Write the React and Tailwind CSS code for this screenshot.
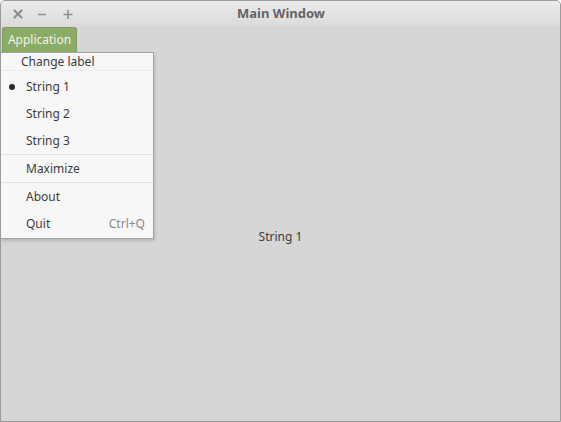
import React from 'react';

const font = { fontFamily: '"Noto Sans", "DejaVu Sans", sans-serif' };

const MenuItem = ({ label, checked, shortcut }) => (
  <div className="relative flex h-[27px] items-center pl-[25px] pr-[8px]">
    {checked && (
      <span className="absolute left-[8px] top-[11px] h-[6px] w-[6px] rounded-full bg-[#2b2b2b]"></span>
    )}
    <span className="flex-1 text-[#3c3c3c]">{label}</span>
    {shortcut && <span className="text-[#8a8a8a]">{shortcut}</span>}
  </div>
);

const Separator = () => <div className="h-px bg-[#e2e2e2]"></div>;

export default function App() {
  return (
    <div
      className="flex h-[422px] w-[561px] flex-col overflow-hidden rounded-t-[5px] border border-[#9b9b9b] bg-[#d6d6d6] text-[12px]"
      style={font}
    >
      {/* Title bar */}
      <div className="relative flex h-[26px] shrink-0 items-center bg-gradient-to-b from-[#ececec] to-[#dadada]">
        <div className="flex items-center gap-[12px] pl-[11px] text-[#8e8e8e]">
          <svg width="12" height="12" viewBox="0 0 12 12">
            <path d="M2.5 2.5 L9.5 9.5 M9.5 2.5 L2.5 9.5" stroke="#8e8e8e" strokeWidth="2.2" strokeLinecap="round" />
          </svg>
          <svg width="12" height="12" viewBox="0 0 12 12">
            <path d="M2 6.5 H10" stroke="#8e8e8e" strokeWidth="1.6" />
          </svg>
          <svg width="12" height="12" viewBox="0 0 12 12" className="ml-[2px]">
            <path d="M1.5 6.5 H10.5 M6 2 V11" stroke="#8e8e8e" strokeWidth="1.6" />
          </svg>
        </div>
        <div className="absolute inset-0 flex items-center justify-center pl-[1px] text-[13px] font-bold text-[#646464]">
          Main Window
        </div>
      </div>

      {/* Menu bar */}
      <div className="relative flex h-[25px] shrink-0 items-end pl-[1px]">
        <div className="flex h-[25px] w-[75px] items-center justify-center rounded-t-[3px] border border-b-0 border-[#7f9b5c] bg-[#8cab66] text-[#f1f5ea]">
          Application
        </div>

        {/* Dropdown menu */}
        <div className="absolute left-[-1px] top-[25px] z-10 w-[154px] border border-[#a3a3a3] bg-[#f7f7f7] pb-[1px] shadow-[1px_2px_3px_rgba(0,0,0,0.15)]">
          <div className="flex h-[18px] items-center border-b border-[#ececec] pl-[20px] text-[#3c3c3c]">
            Change label
          </div>
          <div className="h-[2px]"></div>
          <MenuItem label="String 1" checked />
          <MenuItem label="String 2" />
          <MenuItem label="String 3" />
          <Separator />
          <MenuItem label="Maximize" />
          <Separator />
          <MenuItem label="About" />
          <MenuItem label="Quit" shortcut="Ctrl+Q" />
        </div>
      </div>

      {/* Body */}
      <div className="flex flex-1 items-center justify-center text-[#3c3c3c]">String 1</div>
    </div>
  );
}
